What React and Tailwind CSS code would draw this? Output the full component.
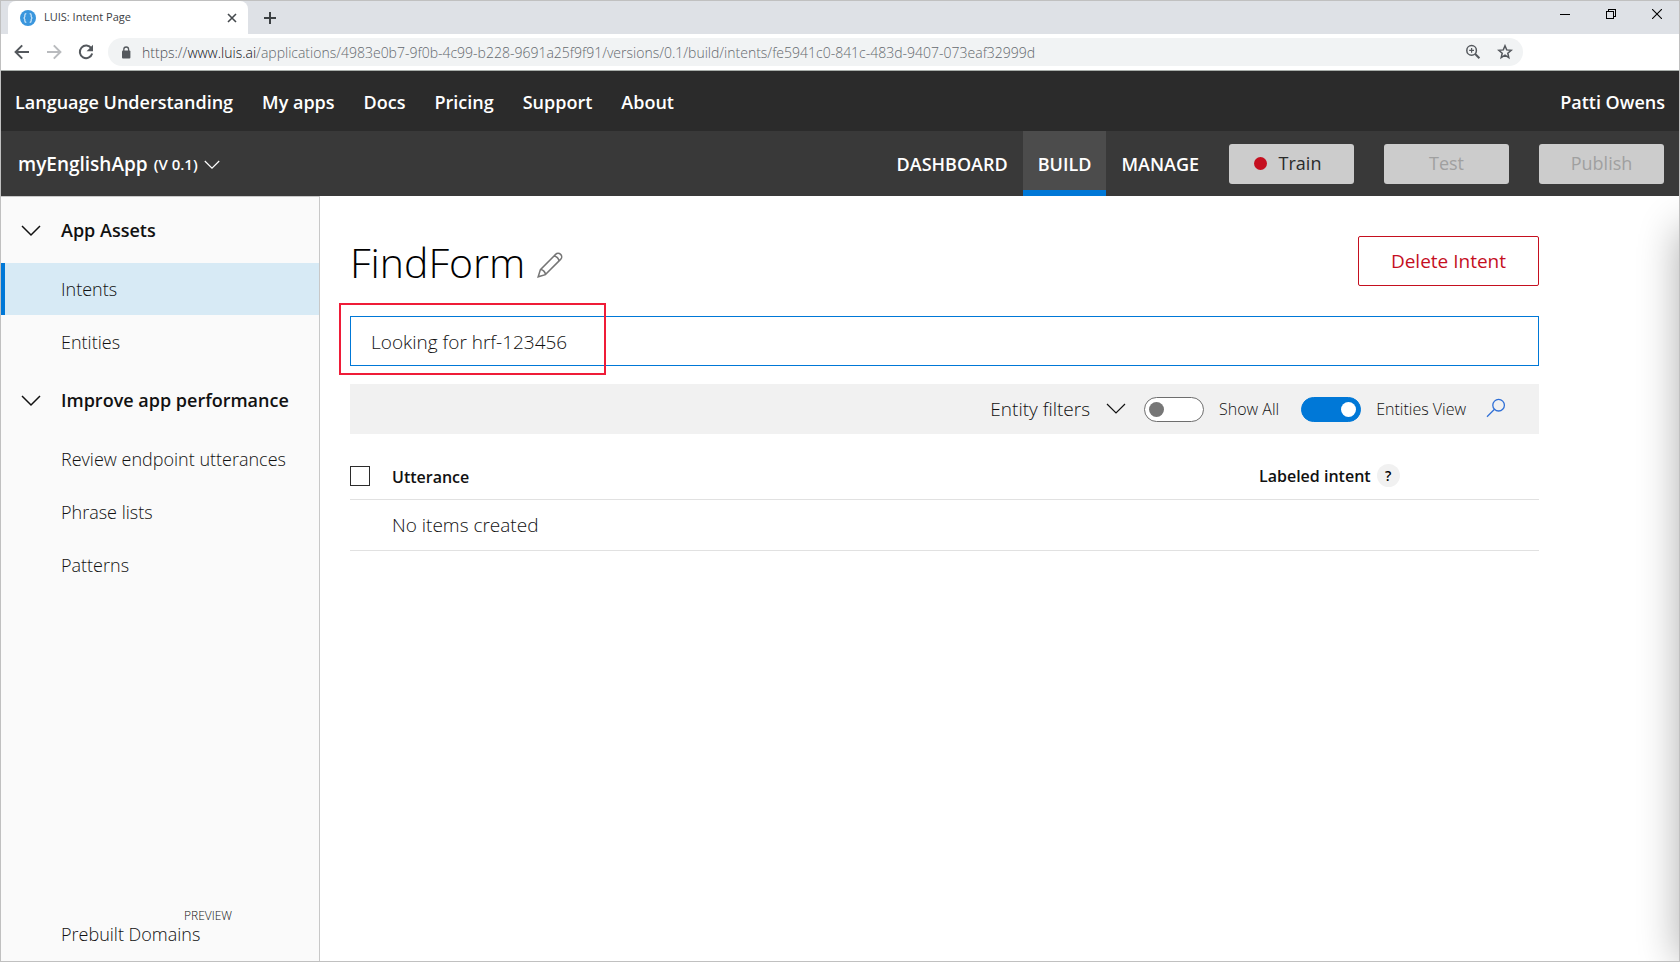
import React from "react";

const NAV_LINKS = ["My apps", "Docs", "Pricing", "Support", "About"];

function Chevron({ className }) {
  return (
    <svg viewBox="0 0 20 12" className={className} fill="none" stroke="currentColor" aria-hidden="true">
      <path d="M1 1 L10 10 L19 1" />
    </svg>
  );
}

function TabStrip() {
  return (
    <div className="flex h-[33px] items-stretch bg-[#dee1e6] pl-[7px]">
      <div className="flex w-60 items-center rounded-t-lg bg-white pr-[11px] pl-3">
        <svg viewBox="0 0 16 16" className="size-4" aria-hidden="true">
          <circle cx="8" cy="8" r="8" fill="#3a96dd" />
          <path
            d="M6.3 3.6c-1.3 0-1.5.5-1.5 1.6v1.5L4 8l.8 1.3v1.5c0 1.1.2 1.6 1.5 1.6M9.7 3.6c1.3 0 1.5.5 1.5 1.6v1.5L12 8l-.8 1.3v1.5c0 1.1-.2 1.6-1.5 1.6"
            fill="none"
            stroke="#cfe6f8"
            strokeWidth="1.2"
          />
        </svg>
        <span className="flex-1 pl-2 text-[11px] text-[#3c4043]">LUIS: Intent Page</span>
        <button type="button" aria-label="Close tab">
          <svg viewBox="0 0 10 10" className="size-[10px]" stroke="#45494d" strokeWidth="1.6" aria-hidden="true">
            <path d="M1 1 L9 9 M9 1 L1 9" />
          </svg>
        </button>
      </div>
      <button type="button" aria-label="New tab" className="ml-4">
        <svg viewBox="0 0 12 12" className="size-3" stroke="#3c4043" strokeWidth="2" aria-hidden="true">
          <path d="M6 0 V12 M0 6 H12" />
        </svg>
      </button>
      <div className="ml-auto flex h-[26px] items-center gap-9 pr-[17px]">
        <button type="button" aria-label="Minimize">
          <svg viewBox="0 0 10 10" className="size-[10px]" stroke="#000" shapeRendering="crispEdges" aria-hidden="true">
            <path d="M0 5.5 H10" />
          </svg>
        </button>
        <button type="button" aria-label="Restore">
          <svg viewBox="0 0 10 10" className="size-[10px]" fill="none" stroke="#000" shapeRendering="crispEdges" aria-hidden="true">
            <path d="M0.5 2.5 H7.5 V9.5 H0.5 Z M2.5 2.5 V0.5 H9.5 V7.5 H7.5" />
          </svg>
        </button>
        <button type="button" aria-label="Close window">
          <svg viewBox="0 0 10 10" className="size-[10px]" stroke="#000" strokeWidth="1.1" aria-hidden="true">
            <path d="M0 0 L10 10 M10 0 L0 10" />
          </svg>
        </button>
      </div>
    </div>
  );
}

function AddressBar() {
  return (
    <div className="flex h-[37px] items-center border-b border-[#a8aeaa] bg-white pr-[156px] pl-[13px]">
      <button type="button" aria-label="Back" className="mr-4">
        <svg viewBox="0 0 16 16" className="size-4" fill="none" stroke="#54585d" strokeWidth="2" aria-hidden="true">
          <path d="M15 8 H2 M8.2 1.4 L1.6 8 L8.2 14.6" />
        </svg>
      </button>
      <button type="button" aria-label="Forward" className="mr-4">
        <svg viewBox="0 0 16 16" className="size-4" fill="none" stroke="#b9bbbe" strokeWidth="2" aria-hidden="true">
          <path d="M1 8 H14 M7.8 1.4 L14.4 8 L7.8 14.6" />
        </svg>
      </button>
      <button type="button" aria-label="Reload" className="mr-[14px]">
        <svg viewBox="0 0 16 16" className="size-4" aria-hidden="true">
          <path d="M13.4 4.4 A6.3 6.3 0 1 0 14.2 9.6" fill="none" stroke="#54585d" strokeWidth="2" />
          <path d="M15 0.8 V7.2 H8.6 Z" fill="#54585d" />
        </svg>
      </button>
      <div className="flex h-7 flex-1 items-center rounded-full bg-[#f1f3f4] pr-[10px] pl-[13px]">
        <svg viewBox="0 0 10 13" className="mr-[11px] h-[13px] w-[10px]" aria-hidden="true">
          <rect x="1" y="4.5" width="8.4" height="8" rx="1" fill="#54585d" />
          <path d="M2.8 5 V3.4 a2.4 2.4 0 0 1 4.8 0 V5" fill="none" stroke="#54585d" strokeWidth="1.3" />
        </svg>
        <span className="flex-1 text-[14px] font-light whitespace-nowrap text-[#64696e]">
          <span className="text-[#4c5054]">https://</span>
          <span className="text-[#111214]">www.luis.ai</span>
          /applications/4983e0b7-9f0b-4c99-b228-9691a25f9f91/versions/0.1/build/intents/fe5941c0-841c-483d-9407-073eaf32999d
        </span>
        <button type="button" aria-label="Page zoom" className="mr-4">
          <svg viewBox="0 0 16 16" className="size-4" fill="none" stroke="#54585d" aria-hidden="true">
            <circle cx="6.6" cy="6.4" r="4.8" strokeWidth="1.5" />
            <path d="M10.2 10 L14.4 14.2" strokeWidth="2" />
            <path d="M6.6 4 V8.8 M4.2 6.4 H9" strokeWidth="1.2" />
          </svg>
        </button>
        <button type="button" aria-label="Bookmark this page">
          <svg viewBox="0 0 16 16" className="size-4" fill="none" stroke="#54585d" strokeWidth="1.5" aria-hidden="true">
            <path d="M8 1.8 L9.7 5.9 L14.2 6.3 L10.8 9.2 L11.8 13.6 L8 11.2 L4.2 13.6 L5.2 9.2 L1.8 6.3 L6.3 5.9 Z" />
          </svg>
        </button>
      </div>
    </div>
  );
}

function SiteHeader() {
  return (
    <header className="flex h-[60px] items-center justify-between bg-[#2b2b2b] pt-[2px] pr-[14px] pl-[14px] text-[18px] font-semibold text-white">
      <nav className="flex gap-[29px]">
        <a href="#home">Language Understanding</a>
        {NAV_LINKS.map((label) => (
          <a key={label} href={"#" + label}>
            {label}
          </a>
        ))}
      </nav>
      <a href="#account">Patti Owens</a>
    </header>
  );
}

function AppBar() {
  return (
    <div className="flex h-[65px] items-center bg-[#393939] pr-[15px] pl-[17px] text-white">
      <button type="button" className="mr-auto flex items-center gap-[6px] pt-[2px] font-semibold">
        <span className="text-[19px]">myEnglishApp</span>
        <span className="text-[15px]">(V 0.1)</span>
        <Chevron className="h-[10px] w-4 stroke-[1.5]" />
      </button>
      <nav className="flex h-full text-[18px] font-semibold">
        <a href="#dashboard" className="flex items-center px-[15px] pt-[2px]">
          DASHBOARD
        </a>
        <a
          href="#build"
          aria-current="page"
          className="flex items-center border-b-6 border-[#0078d7] bg-[#4c4c4c] px-[15px] pt-2"
        >
          BUILD
        </a>
        <a href="#manage" className="flex items-center px-[15px] pt-[2px]">
          MANAGE
        </a>
      </nav>
      <div className="ml-[15px] flex gap-[30px] text-[18px] font-medium">
        <button
          type="button"
          className="flex h-10 w-[125px] items-center justify-center gap-3 rounded-[3px] bg-[#cccccc] pr-2 text-[#2b2b2b]"
        >
          <span className="size-[13px] rounded-full bg-[#c50f1f]" />
          Train
        </button>
        <button type="button" disabled className="h-10 w-[125px] rounded-[3px] bg-[#cccccc] text-[#a0a0a0]">
          Test
        </button>
        <button type="button" disabled className="h-10 w-[125px] rounded-[3px] bg-[#cccccc] text-[#a0a0a0]">
          Publish
        </button>
      </div>
    </div>
  );
}

function NavSection({ title, items, active }) {
  return (
    <section>
      <h2>
        <button type="button" className="flex h-[65px] w-full items-center pl-[20px] text-left font-semibold">
          <Chevron className="mr-[20px] h-3 w-5 stroke-[1.5]" />
          {title}
        </button>
      </h2>
      <ul className="flex flex-col gap-px">
        {items.map((item) => (
          <li key={item}>
            <a
              href={"#" + item}
              className={
                item === active
                  ? "flex h-[52px] items-center border-l-4 border-[#0078d7] bg-[#d7eaf5] pl-[56px]"
                  : "flex h-[52px] items-center pl-[60px]"
              }
            >
              {item}
            </a>
          </li>
        ))}
      </ul>
    </section>
  );
}

function Sidebar() {
  return (
    <aside className="flex w-[319px] shrink-0 flex-col border-t border-r border-[#c8c8c8] bg-[#fafafa] pt-px text-[18px] font-light text-[#111111]">
      <NavSection title="App Assets" items={["Intents", "Entities"]} active="Intents" />
      <NavSection
        title="Improve app performance"
        items={["Review endpoint utterances", "Phrase lists", "Patterns"]}
      />
      <a href="#prebuilt" className="mt-auto mb-[15px] flex flex-col items-start pl-[60px]">
        <span className="pl-[123px] text-[12px] leading-3">PREVIEW</span>
        <span className="leading-6">Prebuilt Domains</span>
      </a>
    </aside>
  );
}

function Toggle({ label, defaultChecked }) {
  return (
    <label className="flex items-center gap-[15px] text-[16px] font-light">
      <input
        type="checkbox"
        role="switch"
        defaultChecked={defaultChecked}
        className="relative h-[25px] w-[60px] appearance-none rounded-full border border-[#6e6e6e] bg-white before:absolute before:top-1 before:left-1 before:size-[15px] before:rounded-full before:bg-[#767676] checked:border-[#0078d7] checked:bg-[#0078d7] checked:before:right-1 checked:before:left-auto checked:before:bg-white"
      />
      {label}
    </label>
  );
}

function FilterBar() {
  return (
    <div className="mt-[18px] flex h-[50px] items-center justify-end bg-[#f1f1f1] pr-[33px] text-[#111111]">
      <button type="button" className="mr-[18px] flex items-center gap-4 text-[19px] font-light">
        Entity filters
        <Chevron className="h-3 w-5 stroke-[1.2]" />
      </button>
      <div className="flex gap-[22px]">
        <Toggle label="Show All" />
        <Toggle label="Entities View" defaultChecked />
      </div>
      <button type="button" aria-label="Search utterances" className="ml-5 pb-[2px]">
        <svg viewBox="0 0 20 20" className="size-5" fill="none" stroke="#2f6fd6" strokeWidth="1.3" aria-hidden="true">
          <circle cx="12.6" cy="7.2" r="5.8" />
          <path d="M8.5 11.3 L1 18.8" />
        </svg>
      </button>
    </div>
  );
}

function UtteranceTable() {
  return (
    <table className="mt-[19px] w-full text-left text-[#111111]">
      <thead>
        <tr className="h-[46px] border-b border-[#e1e1e1] text-[16px]">
          <th className="w-[42px] p-0">
            <input
              type="checkbox"
              aria-label="Select all utterances"
              className="block size-5 appearance-none border border-[#2b2b2b] bg-white"
            />
          </th>
          <th className="p-0 pt-[2px] font-semibold">Utterance</th>
          <th className="w-[280px] p-0 font-semibold">
            <span className="flex items-center gap-[6px]">
              Labeled intent
              <button
                type="button"
                aria-label="About labeled intent"
                className="size-[23px] rounded-full bg-[#f1f1f1] text-[14px] font-semibold text-black"
              >
                ?
              </button>
            </span>
          </th>
        </tr>
      </thead>
      <tbody>
        <tr className="h-[51px] border-b border-[#e1e1e1] text-[19px] font-light">
          <td className="p-0" />
          <td className="p-0 pt-[2px]" colSpan={2}>
            No items created
          </td>
        </tr>
      </tbody>
    </table>
  );
}

function IntentPage() {
  return (
    <main className="relative min-w-0 flex-1 overflow-hidden pt-10 pr-[140px] pl-[30px]">
      <div className="flex items-start justify-between">
        <div className="flex items-end gap-3">
          <h1 className="text-[41px] leading-[52px] font-light text-black">FindForm</h1>
          <button type="button" aria-label="Rename intent" className="pb-[10px]">
            <svg viewBox="0 0 26 26" className="size-[26px]" fill="none" stroke="#767676" strokeWidth="1.5" aria-hidden="true">
              <path d="M1.2 24.8 L3.4 17.6 L18.6 2.4 C20 1 22 .8 23.6 2.4 C25.2 4 25 6 23.6 7.4 L8.4 22.6 Z M3.4 17.6 C6 17.6 8.4 20 8.4 22.6 M17 4 C19.5 4.4 21.6 6.5 22 9" />
            </svg>
          </button>
        </div>
        <button
          type="button"
          className="h-[50px] rounded-[2px] border border-[#c50f1f] px-8 text-[19px] font-medium text-[#c50f1f]"
        >
          Delete Intent
        </button>
      </div>
      <div className="relative mt-7">
        <input
          type="text"
          aria-label="Utterance"
          defaultValue="Looking for hrf-123456"
          className="block h-[50px] w-full border border-[#0078d7] bg-white px-5 pt-[2px] text-[19px] font-light text-[#111111]"
        />
        <div className="pointer-events-none absolute -top-[13px] -left-[11px] h-[72px] w-[267px] border-2 border-[#ef1c38]" />
      </div>
      <FilterBar />
      <UtteranceTable />
      <div className="absolute top-8 bottom-0 left-full w-20 shadow-[0_0_40px_rgba(0,0,0,0.32)]" />
    </main>
  );
}

export default function App() {
  return (
    <div className="flex min-h-screen flex-col border border-[#c0c0c0] bg-white font-['Open_Sans',sans-serif]">
      <TabStrip />
      <AddressBar />
      <SiteHeader />
      <AppBar />
      <div className="flex flex-1">
        <Sidebar />
        <IntentPage />
      </div>
    </div>
  );
}
